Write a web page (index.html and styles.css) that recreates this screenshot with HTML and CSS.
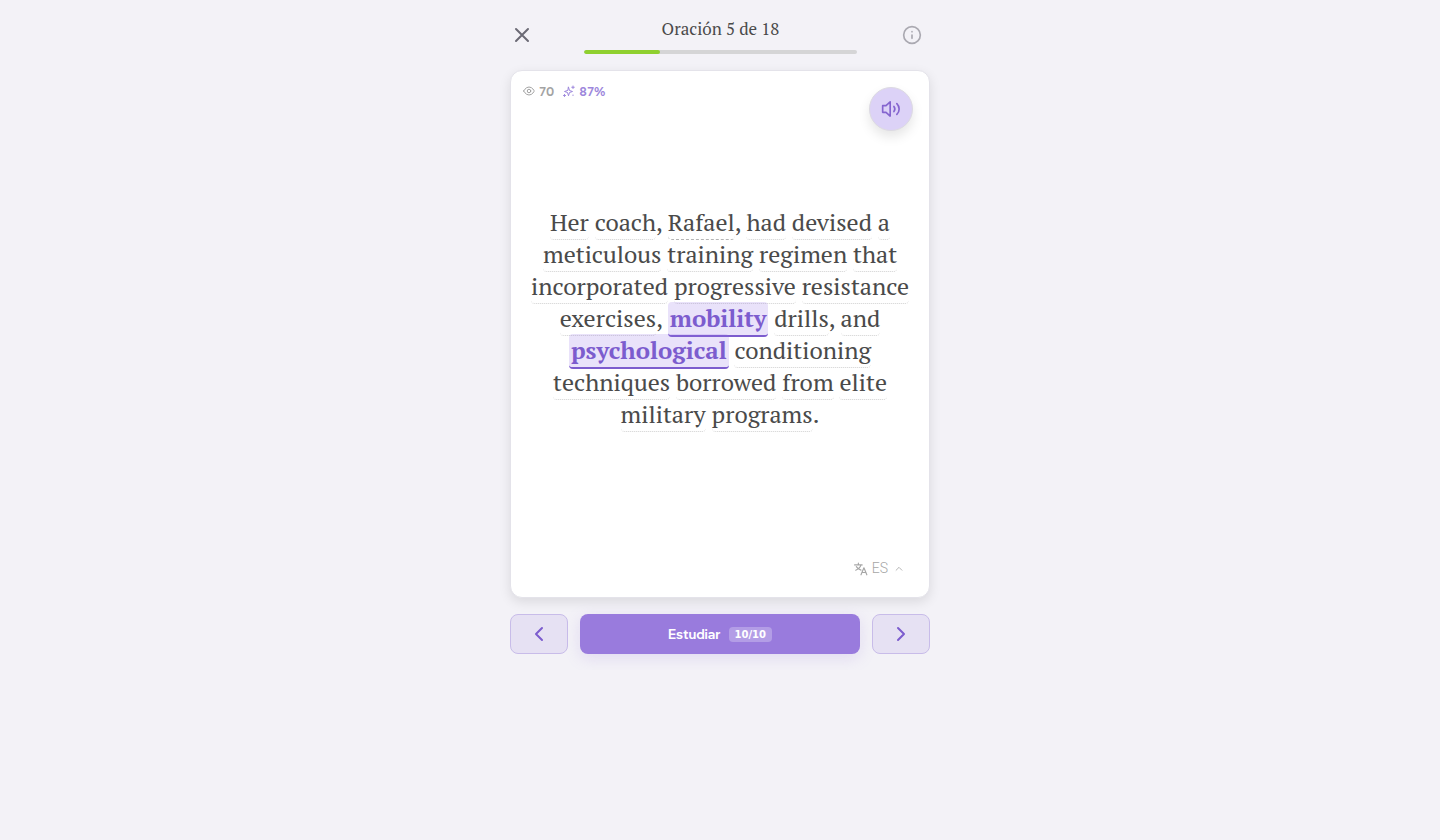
FILE: index.html
```html
<!DOCTYPE html>
<html lang="es">
<head>
<meta charset="utf-8">
<meta name="viewport" content="width=device-width, initial-scale=1">
<title>Oración 5 de 18</title>
<link rel="stylesheet" href="styles.css">
</head>
<body>
<main class="reader">
  <header class="topbar">
    <button class="icon-button" type="button" aria-label="Cerrar">
      <svg width="24" height="24" viewBox="0 0 24 24"><path d="M18 6 6 18M6 6l12 12"/></svg>
    </button>
    <div class="progress">
      <h1 class="title">Oración 5 de 18</h1>
      <div class="track" role="progressbar" aria-label="Progreso" aria-valuenow="5" aria-valuemin="0" aria-valuemax="18"><div class="fill" style="width:27.8%"></div></div>
    </div>
    <button class="icon-button info" type="button" aria-label="Información">
      <svg width="20" height="20" viewBox="0 0 24 24"><circle cx="12" cy="12" r="10"/><path d="M12 16v-4M12 8h.01"/></svg>
    </button>
  </header>

  <article class="card">
    <div class="card-head">
      <div class="stats">
        <span class="stat"><svg width="12" height="12" viewBox="0 0 24 24"><path d="M1.500 12S5 4 12 4s10.500 8 10.500 8S19 20 12 20 1.500 12 1.500 12z"/><circle cx="12" cy="12" r="3.500"/></svg>70</span>
        <span class="stat score"><svg width="12" height="12" viewBox="0 0 24 24"><path d="M11 4.500 13 11l6 2-6 2-2 6.500L9 15l-6-2 6-2zM20 2v5M22.500 4.500h-5M3 19v4M1 21h4M20 20v1"/></svg>87%</span>
      </div>
      <button class="listen" type="button" aria-label="Escuchar">
        <svg width="20" height="20" viewBox="0 0 24 24"><path d="M11 3.500v17l-5-4.500H2V8h4zM15.500 9a5 5 0 0 1 0 6M19 5.500a9 9 0 0 1 0 13"/></svg>
      </button>
    </div>
    <p class="sentence"><span class="word">Her</span> <span class="word">coach</span>, <span class="word name">Rafael</span>, <span class="word">had</span> <span class="word">devised</span> <span class="word">a</span> <span class="word">meticulous</span> <span class="word">training</span> <span class="word">regimen</span> <span class="word">that</span> <span class="word">incorporated</span> <span class="word">progressive</span> <span class="word">resistance</span> <span class="word">exercises</span>, <span class="word target">mobility</span> <span class="word">drills</span>, <span class="word">and</span> <span class="word target">psychological</span> <span class="word">conditioning</span> <span class="word">techniques</span> <span class="word">borrowed</span> <span class="word">from</span> <span class="word">elite</span> <span class="word">military</span> <span class="word">programs</span>.</p>
    <button class="translate" type="button">
      <svg width="14" height="14" viewBox="0 0 24 24"><path d="M1 5h13M7.500 2v3M3 14c5-2 8-5 9-9M4 8c2 3 4 5 8 6M12 22l5-12 5 12M14 18h6"/></svg>
      <span>ES</span>
      <svg class="caret" width="10" height="10" viewBox="0 0 24 24"><path d="m5 15 7-7 7 7"/></svg>
    </button>
  </article>

  <nav class="actions" aria-label="Oraciones">
    <button class="step" type="button" aria-label="Anterior"><svg width="24" height="24" viewBox="0 0 24 24"><path d="m15 18-6-6 6-6"/></svg></button>
    <button class="study" type="button">Estudiar <span class="count">10/10</span></button>
    <button class="step" type="button" aria-label="Siguiente"><svg width="24" height="24" viewBox="0 0 24 24"><path d="m9 18 6-6-6-6"/></svg></button>
  </nav>
</main>
</body>
</html>
```
FILE: styles.css
```css
* { box-sizing: border-box; }
body {
  margin: 0;
  background: #f3f2f7;
  color: #4a4a4a;
  font-family: Figtree, Lato, sans-serif;
}
button { font: inherit; border: 0; padding: 0; background: none; cursor: pointer; }
svg {
  display: block;
  fill: none;
  stroke: currentColor;
  stroke-width: 2;
  stroke-linecap: round;
  stroke-linejoin: round;
}
.reader { width: 100%; max-width: 420px; margin: 0 auto; }
.topbar { display: flex; align-items: center; height: 70px; }
.icon-button {
  flex: none;
  display: grid;
  place-items: center;
  width: 24px;
  height: 40px;
  color: #6b6a75;
}
.info { width: 36px; color: #aaa9b1; }
.progress { flex: 1; padding: 0 37px 0 50px; }
.title {
  margin: 0 0 9px;
  font: 400 17px/25px "PT Serif", "Liberation Serif", serif;
  text-align: center;
}
.track { height: 4px; border-radius: 2px; background: #d5d5d6; overflow: hidden; }
.fill { height: 100%; border-radius: 2px; background: #8fd02f; }
.card {
  display: flex;
  flex-direction: column;
  min-height: 528px;
  border: 1px solid #e4e3ea;
  border-radius: 12px;
  background: #fff;
  box-shadow: 0 4px 12px rgba(0, 0, 0, .1);
}
.card-head {
  display: flex;
  justify-content: space-between;
  align-items: flex-start;
  padding: 12px 16px 0 12px;
}
.stats { display: flex; gap: 9px; }
.stat {
  display: flex;
  align-items: center;
  gap: 4px;
  font-family: Lexend, Figtree, sans-serif;
  font-size: 13px;
  line-height: 16px;
  font-weight: 500;
  color: #a3a3a3;
}
.score { color: #9d87dc; }
.listen {
  display: grid;
  place-items: center;
  width: 44px;
  height: 44px;
  margin-top: 4px;
  border: 1px solid #dcdae2;
  border-radius: 50%;
  background: #dcd2f7;
  color: #8565cf;
  box-shadow: 0 6px 12px rgba(0, 0, 0, .1);
}
.sentence {
  margin: auto 0;
  padding: 0 18px 56px;
  font: 24px/32px "PT Serif", "Liberation Serif", serif;
  text-align: center;
}
.word { padding-bottom: 1px; border-bottom: 1px dotted #d0d0d0; border-radius: 4px; }
.name { border-bottom: 1px dashed #b5b5b5; }
.target {
  padding: 0 2px 1px;
  border-bottom: 2px solid #7c5cce;
  background: rgba(146, 112, 230, .2);
  color: #7c5cce;
  font-weight: 700;
}
.translate {
  align-self: flex-end;
  display: flex;
  align-items: center;
  gap: 4px;
  margin: 0 25px 20px 0;
  font: 300 14px/17px Roboto, sans-serif;
  color: #a6a6a6;
}
.caret { margin-left: 2px; }
.actions { display: flex; gap: 12px; padding: 16px 0; }
.step {
  flex: none;
  display: grid;
  place-items: center;
  width: 58px;
  height: 40px;
  border: 1px solid #c8bce9;
  border-radius: 8px;
  background: #e6e1f3;
  color: #7c5cce;
}
.study {
  flex: 1;
  display: flex;
  align-items: center;
  justify-content: center;
  gap: 8px;
  height: 40px;
  border-radius: 8px;
  background: #997bdd;
  color: #fff;
  font-family: "Wix Madefor Display", "Albert Sans", Figtree, sans-serif;
  font-size: 13px;
  font-weight: 700;
  box-shadow: 0 4px 16px rgba(153, 123, 221, .2);
}
.count {
  padding: 0 6px;
  border-radius: 4px;
  background: #b39de6;
  font: 700 10px/15px "DejaVu Sans", sans-serif;
}
```
